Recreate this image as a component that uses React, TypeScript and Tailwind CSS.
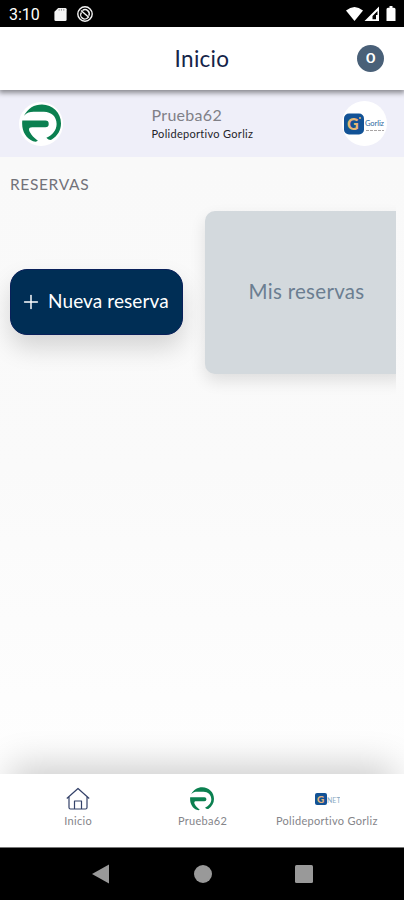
import { Plus } from "lucide-react";

function GreenLogo({ className }: { className: string }) {
  return (
    <svg viewBox="0 0 40 40" className={className} fill="#0b8050">
      <path d="M2 12C6 4.500 12.500 .5 20.500 .5 31.500 .5 40 9 40 20c0 7-3.500 12.500-9.500 16.500-1.500.8-3.500 0-5.500-2 6-2.500 10.500-7.500 10.500-14C35.500 13 30 8 22.500 8H12C8 8 5 9 2 12Z" />
      <path d="M.3 17H24a3.400 3.400 0 0 1 0 6.800H10.500c-3.500 0-4 2-2.500 5 1.600 3.200 4.300 6 8.300 9-1 1-3 1-5 .3C4 35 -.8 27.500 .3 17Z" />
    </svg>
  );
}

function StatusBar() {
  return (
    <div className="flex h-[27px] shrink-0 items-center bg-black pl-[9px] pr-2 text-white">
      <span className="w-[45px] pt-[3px] font-[Roboto] text-[16px] leading-none">3:10</span>
      <svg viewBox="0 0 13 16" className="mt-px h-[15px] w-[13px]" fill="#f5f5f5">
        <path d="M4 1h7.500a1.500 1.500 0 0 1 1.500 1.500v11a1.500 1.500 0 0 1-1.500 1.500h-10A1.500 1.500 0 0 1 0 13.500V5Z" />
        <path d="M5 2v2M7.500 2v2M10 2v2" stroke="#999" strokeWidth="1" />
      </svg>
      <svg viewBox="0 0 16 16" className="ml-[10px] h-4 w-4" fill="none" stroke="#f5f5f5">
        <circle cx="8" cy="8" r="7.200" strokeWidth="1.400" />
        <path d="M4.500 6.500a4 4 0 0 0 6.500 4.800M5.500 4.500a4.200 4.200 0 0 1 6.300 5.200M4 4.500l8 7" strokeWidth="1.400" />
      </svg>
      <svg viewBox="0 0 52 16" className="ml-auto h-4 w-[52px]" fill="#fff">
        <path d="M2 4.500Q10.500-2.500 19 4.500L10.500 15Z" />
        <path fillRule="evenodd" d="M35 .5V15H20.500ZM33.500 5 28.500 10v3.200h3.500V9h1.500Z" />
        <path d="M44 1.800h1.500V0h3v1.800H50a1.500 1.500 0 0 1 1.500 1.500V15h-9V3.300A1.500 1.500 0 0 1 44 1.800Z" />
      </svg>
    </div>
  );
}

function Header() {
  return (
    <header className="relative z-10 grid h-[63px] shrink-0 grid-cols-[1fr_auto_1fr] items-center bg-white px-5 shadow-[0_2px_5px_1px_rgba(0,0,0,0.42)]">
      <h1 className="col-start-2 text-[22.5px] leading-7 tracking-[0.3px] text-[#142449]">Inicio</h1>
      <span className="flex size-[27px] items-center justify-center justify-self-end rounded-full bg-[#496078] text-white">
        <span className="scale-x-125 text-[13px] font-bold leading-none">0</span>
      </span>
    </header>
  );
}

function ClubBar() {
  return (
    <section className="flex h-[67px] shrink-0 items-center justify-between bg-[#efeff9] pl-[19px] pr-[17px]">
      <div className="flex size-11 items-center justify-center rounded-full bg-white">
        <GreenLogo className="size-[39px]" />
      </div>
      <div className="w-[102px] whitespace-nowrap pt-px">
        <p className="text-base leading-[19px] tracking-[0.3px] text-[#808087]">Prueba62</p>
        <p className="text-[11px] leading-[19px] tracking-[0.3px] text-[#24242a]">Polideportivo Gorliz</p>
      </div>
      <div className="flex size-[45px] items-center justify-center rounded-full bg-white">
        <svg viewBox="0 0 43 24" className="h-6 w-[43px]">
          <rect x="1" y="1.500" width="20" height="21" rx="5" fill="#125296" />
          <text x="4" y="18" fontSize="16" fontWeight="900" fill="#e7b775">G</text>
          <circle cx="17" cy="6" r="1" fill="#e7b775" />
          <text x="22" y="14" fontSize="7.500" fill="#2d68a0" textLength="19">Gorliz</text>
          <path d="M23 18.500h18" stroke="#a9a5a5" strokeDasharray="3 1" />
        </svg>
      </div>
    </section>
  );
}

function Reservations() {
  return (
    <main className="flex-1 overflow-hidden bg-linear-to-b from-[#f9f9f9] via-[#fafafa] to-[#fefefe]">
      <h2 className="pl-[10px] pt-[17px] text-[15.500px] leading-5 tracking-[0.65px] text-[#727279]">RESERVAS</h2>
      <div className="mr-2 flex h-[220px] items-start overflow-hidden pl-[10px] pt-[17px]">
        <button className="mt-[58px] flex h-[66px] w-[173px] shrink-0 items-center rounded-[17px] border border-[#09205a] bg-[#002e55] pb-px pl-[9px] text-white shadow-[0_13px_25px_rgba(0,0,0,0.15)]">
          <Plus className="size-[22px]" strokeWidth={1.6} />
          <span className="ml-[6px] whitespace-nowrap text-[19px] tracking-[0.1px]">Nueva reserva</span>
        </button>
        <button className="ml-[22px] flex h-[163px] w-[203px] shrink-0 items-center justify-center rounded-[10px] bg-[#d3d9dd] pb-[2px] text-[20.500px] tracking-[0.3px] text-[#6b7e91] shadow-[0_7px_16px_rgba(0,0,0,0.11)]">
          Mis reservas
        </button>
      </div>
    </main>
  );
}

function BottomNav() {
  const labels = "text-[11px] leading-[14px] tracking-[0.3px] text-[#85858a]";

  return (
    <nav className="relative z-10 flex h-[73px] shrink-0 bg-white pl-4 pr-[15px] pt-[13px] shadow-[0_-18px_36px_-10px_rgba(0,0,0,0.2)]">
      <div className="flex flex-1 flex-col items-center gap-[3px]">
        <svg viewBox="0 0 24 24" className="size-6" fill="none" stroke="#344269" strokeWidth="1.200" strokeLinejoin="round">
          <path d="m.8 11.500 11.200-10 11.200 10M3 10v10.500a1.500 1.500 0 0 0 1.500 1.500h15a1.500 1.500 0 0 0 1.500-1.500V10M8.500 22v-8h7v8" />
        </svg>
        <span className={labels}>Inicio</span>
      </div>
      <div className="flex flex-1 flex-col items-center gap-[3px]">
        <GreenLogo className="size-6" />
        <span className={labels}>Prueba62</span>
      </div>
      <div className="flex flex-1 flex-col items-center gap-[3px]">
        <svg viewBox="0 0 26 24" className="h-6 w-[26px]">
          <rect x="1" y="6" width="12" height="12" rx="2" fill="#125296" />
          <text x="3" y="15.500" fontSize="10" fontWeight="900" fill="#e4b57c">G</text>
          <text x="13" y="15.500" fontSize="7" fill="#8aaac4">NET</text>
        </svg>
        <span className={labels}>Polideportivo Gorliz</span>
      </div>
    </nav>
  );
}

export default function App() {
  return (
    <div className="flex h-[900px] w-[404px] flex-col overflow-hidden bg-white font-[Lato,sans-serif]">
      <StatusBar />
      <Header />
      <ClubBar />
      <Reservations />
      <BottomNav />
      <div className="z-10 flex h-[53px] shrink-0 items-center border-t border-[#777] bg-black px-[91px]">
        <svg viewBox="0 0 222 20" className="h-5 w-[222px]" fill="#999">
          <path d="M1 10 18 .5v19Z" />
          <circle cx="112" cy="10" r="9" />
          <rect x="204" y="1" width="18" height="18" rx="1.500" />
        </svg>
      </div>
    </div>
  );
}
